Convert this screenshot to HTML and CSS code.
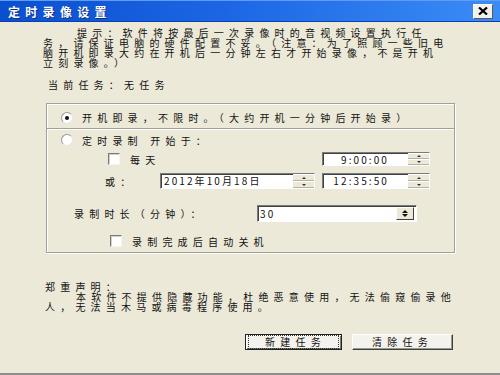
FILE: index.html
```html
<!DOCTYPE html>
<html lang="zh-CN">
<head>
    <meta charset="UTF-8">
    <title>定时录像设置</title>
    <link rel="stylesheet" href="styles.css">
</head>
<body>
    <div class="window">
        <div class="titlebar">
            <span class="title">定时录像设置</span>
            <span class="close">
                <svg width="10" height="8" viewBox="0 0 10 8"><path d="M1 0.5 L9 7.5 M9 0.5 L1 7.5" stroke="#000" stroke-width="2.2"/></svg>
            </span>
        </div>
        <div class="content">
            <p class="hint">提示：软件将按最后一次录像时的音视频设置执行任<br>务，请保证电脑的硬件配置不妥。（注意：为了照顾一些旧电<br>脑开机即录大约在开机后一分钟左右才开始录像，不是开机<br>立刻录像。）</p>
            <div class="current">当前任务：无任务</div>

            <div class="group">
                <div class="opt opt-now">
                    <span class="radio checked"></span>
                    <span>开机即录，不限时。（大约开机一分钟后开始录）</span>
                </div>
                <div class="sep"></div>
                <div class="opt opt-timed">
                    <span class="radio"></span>
                    <span>定时录制 开始于：</span>
                </div>
                <div class="row row-daily">
                    <span class="check"></span>
                    <span class="check-label">每天</span>
                    <div class="field time">
                        <span class="val">9:00:00</span>
                        <span class="spin"><i class="up"></i><i class="down"></i></span>
                    </div>
                </div>
                <div class="row row-or">
                    <span>或：</span>
                    <div class="field date">
                        <span class="val">2012年10月18日</span>
                        <span class="spin"><i class="up"></i><i class="down"></i></span>
                    </div>
                    <div class="field time">
                        <span class="val">12:35:50</span>
                        <span class="spin"><i class="up"></i><i class="down"></i></span>
                    </div>
                </div>
                <div class="row row-dur">
                    <span>录制时长（分钟）：</span>
                    <div class="field number">
                        <span class="val">30</span>
                        <span class="spin-box"><i class="up"></i><i class="down"></i></span>
                    </div>
                </div>
                <div class="row row-off">
                    <span class="check"></span>
                    <span class="check-label">录制完成后自动关机</span>
                </div>
            </div>

            <div class="notice">
                <div>郑重声明：</div>
                <div class="notice-body">本软件不提供隐藏功能，杜绝恶意使用，无法偷窥偷录他<br>人，无法当木马或病毒程序使用。</div>
            </div>

            <div class="buttons">
                <button class="btn default"><span class="focus">新建任务</span></button>
                <button class="btn">清除任务</button>
            </div>
        </div>
    </div>
</body>
</html>
```
FILE: styles.css
```css
body {
    margin: 0;
    font-family: "Noto Sans CJK SC", "Noto Sans", sans-serif;
    font-size: 10px;
    color: #111;
}
.window {
    width: 500px;
    height: 375px;
    box-sizing: border-box;
    background-color: #ece9d8;
    border-bottom: 2px solid #8c8c8c;
    overflow: hidden;
}

/* title bar */
.titlebar {
    height: 22px;
    display: flex;
    align-items: center;
    justify-content: space-between;
    padding: 0 7px 0 8px;
    background: linear-gradient(to right, #0a4fcf, #1c66e4 45%, #3a8cf6);
    box-shadow: inset 0 1px #5f9cf8, inset 0 -1px #0a3fb0;
}
.title {
    color: #fff;
    font-weight: bold;
    font-size: 12px;
    letter-spacing: 5.3px;
    text-shadow: 1px 1px #0a2f80;
}
.close {
    width: 18px;
    height: 13px;
    display: flex;
    align-items: center;
    justify-content: center;
    background-color: #f2f1ea;
    border: 1px solid;
    border-color: #fff #5a5a5a #5a5a5a #fff;
}

/* body */
.content {
    padding: 6px 45px 0 43px;
    letter-spacing: 5.2px;
}
.hint {
    margin: 0;
    line-height: 10px;
    text-indent: 34px;
    white-space: nowrap;
}
.current {
    margin: 11px 0 0 5px;
    line-height: 12px;
}

/* group box */
.group {
    width: 409px;
    height: 150px;
    box-sizing: border-box;
    margin: 12px 0 0 3px;
    border: 1px solid #a3a196;
    box-shadow: inset 1px 1px #fff, 1px 1px #fff;
}
.opt {
    display: flex;
    align-items: center;
    gap: 9px;
    padding-left: 14px;
}
.opt-now {
    height: 21px;
    padding-top: 3px;
}
.opt-timed {
    height: 20px;
}
.sep {
    height: 1px;
    background-color: #a3a196;
    border-bottom: 1px solid #fff;
}
.radio {
    width: 10px;
    height: 10px;
    border-radius: 50%;
    background-color: #fff;
    border: 1px solid #9a9a9a;
    border-right-color: #e6e6e6;
    border-bottom-color: #e6e6e6;
    display: flex;
    align-items: center;
    justify-content: center;
}
.radio.checked::after {
    content: "";
    width: 4px;
    height: 4px;
    border-radius: 50%;
    background-color: #111;
}
.row {
    display: flex;
    align-items: center;
    padding-right: 24px;
}
.row-daily {
    height: 14px;
    margin-top: 2px;
    padding-left: 61px;
}
.row-or {
    height: 16px;
    margin-top: 7px;
    padding-left: 58px;
    gap: 7px;
}
.row-dur {
    height: 17px;
    margin-top: 16px;
    padding-left: 27px;
    padding-right: 37px;
}
.row-off {
    height: 12px;
    margin-top: 13px;
    padding-left: 63px;
}
.check {
    width: 10px;
    height: 10px;
    background-color: #fff;
    border: 1px solid;
    border-color: #7a7a7a #f4f4f4 #f4f4f4 #7a7a7a;
    box-shadow: inset 1px 1px #d4d0c8;
}
.check-label {
    margin-left: 10px;
}

/* input fields */
.field {
    display: flex;
    height: 100%;
    box-sizing: border-box;
    margin-left: auto;
    background-color: #fff;
    border: 1px solid;
    border-color: #7a7a7a #fff #fff #7a7a7a;
    box-shadow: inset 1px 1px #404040;
    letter-spacing: 2.1px;
}
.row-or .field.date {
    margin-left: auto;
}
.row-or .field.time {
    margin-left: 0;
}
.field .val {
    flex: 1;
    padding-left: 3px;
    line-height: 14px;
    white-space: nowrap;
}
.field.time {
    width: 108px;
}
.field.time .val {
    text-align: right;
    padding-right: 19px;
}
.field.date {
    width: 155px;
}
.field.number {
    width: 160px;
}
.field.number .val {
    line-height: 15px;
    padding-left: 2px;
}
.spin {
    width: 21px;
    display: flex;
    flex-direction: column;
    background-color: #ece9d8;
}
.spin i {
    flex: 1;
    display: flex;
    align-items: center;
    justify-content: center;
    border-top: 1px solid #fff;
    border-bottom: 1px solid #b5b2a4;
}
.spin i::after,
.spin-box i::after {
    content: "";
    border-left: 2px solid transparent;
    border-right: 2px solid transparent;
}
.spin .up::after {
    border-bottom: 2px solid #333;
}
.spin .down::after {
    border-top: 2px solid #333;
}
.spin-box {
    width: 16px;
    margin: 1px 2px 1px 0;
    display: flex;
    flex-direction: column;
    justify-content: center;
    gap: 1px;
    background-color: #ece9d8;
    border: 1px solid;
    border-color: #fff #404040 #404040 #fff;
}
.spin-box i {
    display: flex;
    justify-content: center;
}
.spin-box i::after {
    border-left-width: 3px;
    border-right-width: 3px;
}
.spin-box .up::after {
    border-bottom: 3px solid #111;
}
.spin-box .down::after {
    border-top: 3px solid #111;
}

/* notice */
.notice {
    margin: 29px 0 0 2px;
    line-height: 10px;
    white-space: nowrap;
}
.notice-body {
    text-indent: 31px;
}

/* buttons */
.buttons {
    display: flex;
    gap: 10px;
    margin: 22px 2px 0 202px;
}
.btn {
    height: 16px;
    padding: 0;
    font-family: inherit;
    font-size: 10px;
    letter-spacing: 5.2px;
    color: #111;
    background-color: #f3f2ec;
    border: 1px solid;
    border-color: #fff #404040 #404040 #fff;
    box-shadow: inset -1px -1px #9a988c;
    display: flex;
    align-items: center;
    justify-content: center;
    line-height: 10px;
}
.btn.default {
    width: 97px;
    border: 1px solid #222;
    box-shadow: inset 1px 1px #fff, inset -1px -1px #7a7a7a;
}
.btn:not(.default) {
    width: 101px;
}
.focus {
    border: 1px dotted #333;
    padding: 1px 12px 1px 16px;
}
```
